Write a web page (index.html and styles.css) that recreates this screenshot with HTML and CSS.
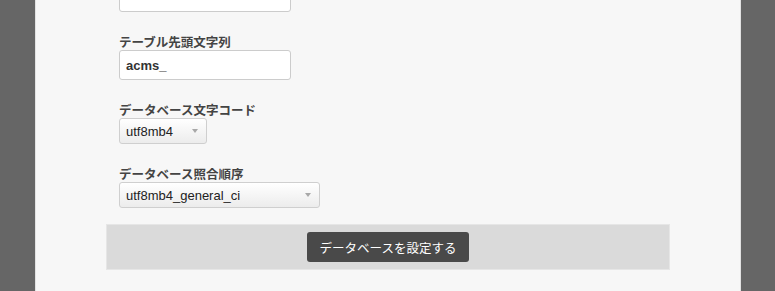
FILE: index.html
```html
<!DOCTYPE html>
<html lang="ja">
<head>
<meta charset="utf-8">
<link rel="stylesheet" href="styles.css">
</head>
<body>
<div class="panel">
  <div class="form">
    <div class="group first">
      <input class="text" type="text" value="">
    </div>
    <div class="group">
      <label class="label">テーブル先頭文字列</label>
      <input class="text bold" type="text" value="acms_">
    </div>
    <div class="group">
      <label class="label">データベース文字コード</label>
      <div class="select sel-short"><span>utf8mb4</span><i class="arrow"></i></div>
    </div>
    <div class="group">
      <label class="label">データベース照合順序</label>
      <div class="select sel-long"><span>utf8mb4_general_ci</span><i class="arrow"></i></div>
    </div>
  </div>
  <div class="bar">
    <button class="btn">データベースを設定する</button>
  </div>
</div>
</body>
</html>
```
FILE: styles.css
```css
html, body {
  margin: 0;
  padding: 0;
  height: 100%;
}
body {
  background: #666666;
  font-family: "Liberation Sans", "Noto Sans CJK JP", sans-serif;
  color: #333;
}
.panel {
  width: 706px;
  margin-left: 35px;
  min-height: 100%;
  background: #f7f7f7;
  border-left: 1px solid #e2e2e2;
  border-right: 1px solid #e2e2e2;
  padding: 0 70px;
  box-sizing: border-box;
  overflow: hidden;
}
.form {
  padding: 0 13px;
  margin-top: -18px;
}
.group {
  margin-bottom: 21px;
}
.label {
  display: block;
  height: 17px;
  line-height: 17px;
  font-family: "Noto Sans CJK JP", sans-serif;
  font-weight: bold;
  font-size: 12.5px;
  color: #444;
}
.text {
  display: block;
  box-sizing: border-box;
  width: 172px;
  height: 30px;
  border: 1px solid #cccccc;
  border-radius: 3px;
  background: #fff;
  padding: 0 6px;
  margin: 0;
  font-family: "Liberation Sans", sans-serif;
  font-size: 13px;
  color: #333;
}
.text.bold {
  font-weight: bold;
}
.select {
  position: relative;
  box-sizing: border-box;
  height: 26px;
  border: 1px solid #cfcfcf;
  border-radius: 3px;
  background: linear-gradient(#ffffff, #ececec);
  padding: 0 6px;
  display: flex;
  align-items: center;
  font-size: 13px;
  color: #222;
}
.sel-short { width: 88px; }
.sel-long { width: 201px; }
.arrow {
  position: absolute;
  right: 8px;
  top: 10px;
  width: 0;
  height: 0;
  border-left: 3px solid transparent;
  border-right: 3px solid transparent;
  border-top: 4px solid #a8a8a8;
}
.bar {
  margin-top: -5px;
  background: #dadada;
  border: 1px solid #e6e6e6;
  padding: 7px 0 7px;
  display: flex;
  justify-content: center;
}
.btn {
  width: 162px;
  height: 30px;
  border: none;
  border-radius: 3px;
  background: #494949;
  color: #fff;
  font-family: "Noto Sans CJK JP", sans-serif;
  font-size: 12.5px;
  padding: 0;
}
```
